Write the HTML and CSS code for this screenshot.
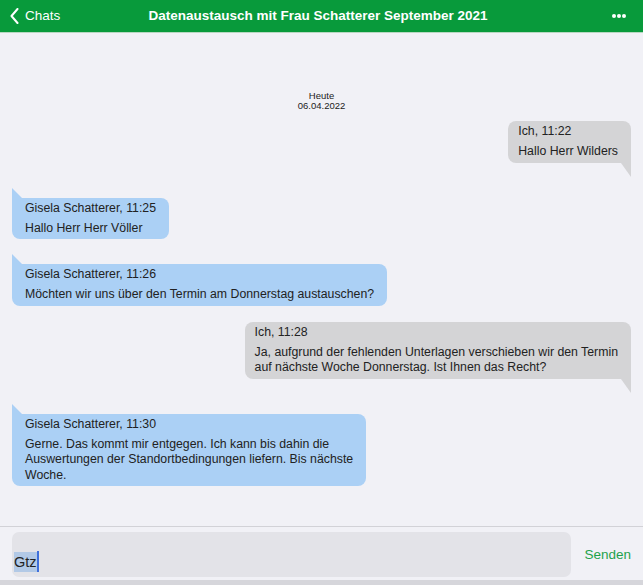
FILE: index.html
```html
<!DOCTYPE html>
<html lang="de">
<head>
    <meta charset="UTF-8">
    <meta name="viewport" content="width=device-width, initial-scale=1.0">
    <title>Chat</title>
    <link rel="stylesheet" href="styles.css">
</head>
<body>
    <div class="app">
        <header class="topbar">
            <a class="back" href="#">
                <svg class="chevron" width="9" height="16" viewBox="0 0 9 16">
                    <path d="M7.5 1 L1.5 8 L7.5 15" fill="none" stroke="#fff" stroke-width="2" stroke-linecap="round" stroke-linejoin="round"/>
                </svg>
                <span>Chats</span>
            </a>
            <h1 class="title">Datenaustausch mit Frau Schatterer September 2021</h1>
            <div class="more"><span></span><span></span><span></span></div>
        </header>

        <main class="messages">
            <div class="day">
                <div>Heute</div>
                <div>06.04.2022</div>
            </div>

            <div class="msg out">
                <div class="bubble">
                    <div class="meta">Ich, 11:22</div>
                    <div class="text">Hallo Herr Wilders</div>
                </div>
            </div>

            <div class="msg in">
                <div class="bubble">
                    <div class="meta">Gisela Schatterer, 11:25</div>
                    <div class="text">Hallo Herr Herr Völler</div>
                </div>
            </div>

            <div class="msg in">
                <div class="bubble">
                    <div class="meta">Gisela Schatterer, 11:26</div>
                    <div class="text">Möchten wir uns über den Termin am Donnerstag austauschen?</div>
                </div>
            </div>

            <div class="msg out">
                <div class="bubble">
                    <div class="meta">Ich, 11:28</div>
                    <div class="text">Ja, aufgrund der fehlenden Unterlagen verschieben wir den Termin<br>auf nächste Woche Donnerstag. Ist Ihnen das Recht?</div>
                </div>
            </div>

            <div class="msg in">
                <div class="bubble">
                    <div class="meta">Gisela Schatterer, 11:30</div>
                    <div class="text">Gerne. Das kommt mir entgegen. Ich kann bis dahin die<br>Auswertungen der Standortbedingungen liefern. Bis nächste<br>Woche.</div>
                </div>
            </div>
        </main>

        <footer class="composer">
            <div class="input"><span class="selected">Gtz</span><span class="caret"></span></div>
            <button class="send">Senden</button>
        </footer>
    </div>
</body>
</html>
```

FILE: styles.css
```css
* {
    box-sizing: border-box;
}

body {
    margin: 0;
    font-family: "Liberation Sans", Arial, sans-serif;
    background-color: #f1f1f6;
    color: #222;
}

.app {
    display: flex;
    flex-direction: column;
    height: 585px;
    overflow: hidden;
}

/* top bar */
.topbar {
    display: grid;
    grid-template-columns: 1fr auto 1fr;
    align-items: center;
    height: 33px;
    padding: 0 17px 1px 10px;
    background-color: #089a3b;
    border-bottom: 1px solid #b9d7c2;
    color: #fff;
}

.back {
    display: flex;
    align-items: center;
    gap: 6px;
    color: #fff;
    text-decoration: none;
    font-size: 13.5px;
}

.chevron {
    display: block;
}

.title {
    margin: 0;
    font-size: 13.5px;
    font-weight: bold;
    white-space: nowrap;
}

.more {
    display: flex;
    justify-content: flex-end;
    gap: 1px;
}

.more span {
    width: 4px;
    height: 4px;
    border-radius: 50%;
    background-color: #fff;
}

/* messages */
.messages {
    flex: 1;
    display: flex;
    flex-direction: column;
    padding: 58px 12px 0;
}

.day {
    text-align: center;
    font-size: 9.5px;
    line-height: 10px;
    color: #222;
    margin-bottom: 10px;
}

.msg {
    display: flex;
    margin-bottom: 14px;
}

.msg.out {
    justify-content: flex-end;
    padding-bottom: 11px;
}

.msg.in {
    padding-top: 10px;
}

.in + .in {
    margin-top: 1px;
}

.in + .out {
    margin-top: 2px;
}

.bubble {
    position: relative;
    padding: 3px 13px;
    border-radius: 8px;
    font-size: 12.3px;
    line-height: 15.5px;
    white-space: nowrap;
}

.meta {
    margin-bottom: 4.5px;
}

.out .bubble {
    padding-left: 10px;
    background-color: #d4d4d6;
    border-bottom-right-radius: 0;
}

.in .bubble {
    background-color: #abd0f5;
    border-top-left-radius: 0;
}

.out .bubble::after {
    content: "";
    position: absolute;
    right: 0;
    top: 100%;
    border-top: 14px solid #d4d4d6;
    border-left: 10px solid transparent;
}

.in .bubble::before {
    content: "";
    position: absolute;
    left: 0;
    bottom: 100%;
    border-bottom: 10px solid #abd0f5;
    border-right: 10px solid transparent;
}

/* composer */
.composer {
    display: flex;
    align-items: center;
    gap: 13px;
    height: 59px;
    padding: 5px 12px 3px;
    border-top: 1px solid #d2d2d7;
    border-bottom: 5px solid #d6d6db;
    background-color: #f1f1f6;
}

.input {
    flex: 1;
    display: flex;
    align-items: flex-end;
    height: 45px;
    padding: 0 2px 5px;
    border-radius: 7px;
    background-color: #e3e3e8;
    font-size: 14.5px;
    line-height: 20px;
}

.selected {
    background-color: #b2c9e6;
    color: #222;
}

.caret {
    width: 2px;
    height: 21px;
    background-color: #3f6fdb;
}

.send {
    border: none;
    background: none;
    padding: 0;
    color: #1ea24b;
    font-family: inherit;
    font-size: 13.5px;
    cursor: pointer;
}
```
